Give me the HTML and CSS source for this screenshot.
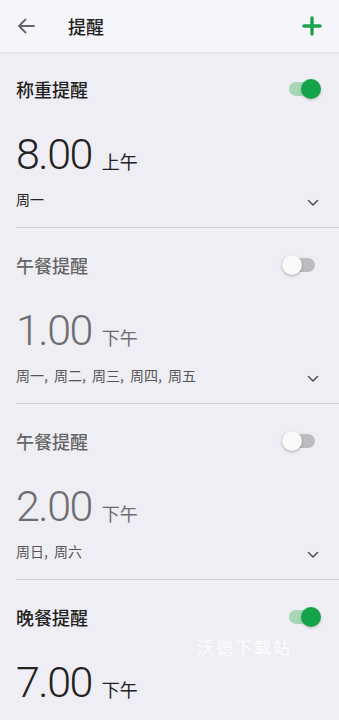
FILE: index.html
```html
<!DOCTYPE html>
<html lang="zh">
<head>
<meta charset="utf-8">
<link rel="stylesheet" href="styles.css">
</head>
<body>
<div class="header">
  <svg class="back" width="18" height="16" viewBox="0 0 18 16"><path d="M17 8H2M8.5 1.5L2 8l6.5 6.5" fill="none" stroke="#666" stroke-width="1.8" stroke-linecap="round" stroke-linejoin="round"/></svg>
  <div class="title">提醒</div>
  <svg class="plus" width="20" height="20" viewBox="0 0 20 20"><path d="M10 2v16M2 10h16" stroke="#1aa34a" stroke-width="3.4" stroke-linecap="round"/></svg>
</div>

<div class="section">
  <div class="row-title"><span class="name">称重提醒</span><span class="toggle on"><span class="thumb"></span></span></div>
  <div class="row-time"><span class="num">8.00</span><span class="ampm">上午</span></div>
  <div class="row-days"><span class="days">周一</span><svg class="chev" width="12" height="8" viewBox="0 0 12 8"><path d="M1.5 1.5L6 6l4.5-4.5" fill="none" stroke="#555" stroke-width="1.6" stroke-linecap="round" stroke-linejoin="round"/></svg></div>
</div>

<div class="section off">
  <div class="row-title"><span class="name">午餐提醒</span><span class="toggle"><span class="thumb"></span></span></div>
  <div class="row-time"><span class="num">1.00</span><span class="ampm">下午</span></div>
  <div class="row-days"><span class="days">周一, 周二, 周三, 周四, 周五</span><svg class="chev" width="12" height="8" viewBox="0 0 12 8"><path d="M1.5 1.5L6 6l4.5-4.5" fill="none" stroke="#555" stroke-width="1.6" stroke-linecap="round" stroke-linejoin="round"/></svg></div>
</div>

<div class="section off">
  <div class="row-title"><span class="name">午餐提醒</span><span class="toggle"><span class="thumb"></span></span></div>
  <div class="row-time"><span class="num">2.00</span><span class="ampm">下午</span></div>
  <div class="row-days"><span class="days">周日, 周六</span><svg class="chev" width="12" height="8" viewBox="0 0 12 8"><path d="M1.5 1.5L6 6l4.5-4.5" fill="none" stroke="#555" stroke-width="1.6" stroke-linecap="round" stroke-linejoin="round"/></svg></div>
</div>

<div class="section last">
  <div class="row-title"><span class="name">晚餐提醒</span><span class="toggle on"><span class="thumb"></span></span></div>
  <div class="row-time"><span class="num">7.00</span><span class="ampm">下午</span></div>
  <div class="row-days"><span class="days">每天</span></div>
</div>

<div class="watermark">沃德下载站</div>
</body>
</html>
```

FILE: styles.css
```css
* { box-sizing: border-box; }
html, body { margin: 0; padding: 0; }
body {
  background: #efeef5;
  font-family: "Noto Sans CJK SC", "Noto Sans", sans-serif;
  color: #222;
  width: 339px;
  height: 720px;
  overflow: hidden;
  position: relative;
}
.header {
  height: 52px;
  background: #f6f5fa;
  display: flex;
  align-items: center;
  padding: 0 17px 0 17px;
  box-shadow: 0 1px 3px rgba(0,0,0,0.08);
  position: relative;
}
.back { flex: none; }
.title {
  font-size: 18px;
  font-weight: 500;
  color: #222;
  margin-left: 33px;
  flex: 1;
  line-height: 24px;
}
.plus { flex: none; }
.section {
  margin-left: 16px;
  padding: 23px 17px 18px 0;
  border-bottom: 1px solid #d3d2d9;
  height: 176px;
}
.row-title {
  height: 28px;
  display: flex;
  align-items: center;
  justify-content: space-between;
}
.name {
  font-size: 18px;
  font-weight: 500;
  line-height: 28px;
  color: #222;
}
.off .name { color: #666; }
.toggle {
  position: relative;
  width: 26px;
  height: 14px;
  border-radius: 7px;
  background: #bdbcc1;
  margin-right: 7px;
}
.toggle .thumb {
  position: absolute;
  top: -3px;
  left: -7px;
  width: 20px;
  height: 20px;
  border-radius: 50%;
  background: #f9f9f9;
  box-shadow: 0 1px 3px rgba(0,0,0,0.3);
}
.toggle.on { background: #a6d8b6; }
.toggle.on .thumb {
  left: auto;
  right: -6px;
  background: #15a34a;
  box-shadow: 0 1px 3px rgba(0,0,0,0.2);
}
.row-time {
  margin-top: 29px;
  height: 44px;
  display: flex;
  align-items: baseline;
}
.num {
  font-family: Roboto, "Noto Sans", sans-serif;
  font-weight: 300;
  font-size: 43px;
  letter-spacing: -1.5px;
  line-height: 44px;
  color: #222;
}
.ampm {
  font-size: 18px;
  margin-left: 10px;
  color: #222;
}
.off .num, .off .ampm { color: #6e6d72; }
.row-days {
  margin-top: 13px;
  height: 20px;
  display: flex;
  justify-content: space-between;
  align-items: center;
}
.last .row-days { height: 14px; overflow: hidden; align-items: flex-start; }
.days {
  font-size: 14px;
  line-height: 20px;
  word-spacing: 3px;
  color: #222;
}
.off .days { color: #555; }
.chev { margin-top: 8px; margin-right: 3px; }
.watermark {
  position: absolute;
  left: 197px;
  top: 634px;
  color: rgba(255,255,255,0.9);
  font-size: 17px;
  letter-spacing: 2px;
}
```
